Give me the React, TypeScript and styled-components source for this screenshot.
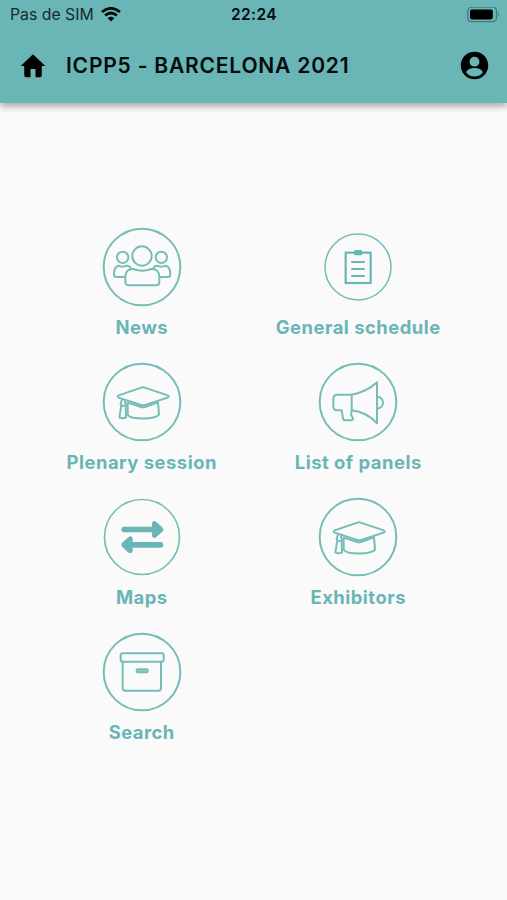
import React from "react";
import styled, { createGlobalStyle } from "styled-components";

const TEAL = "#6ab5b5";

const GlobalStyle = createGlobalStyle`
  * { box-sizing: border-box; }
  body { margin: 0; background: #fafafa; font-family: Inter, "Liberation Sans", sans-serif; }
`;

const Screen = styled.div`
  width: 507px;
  height: 900px;
  overflow: hidden;
  background: #fafafa;
`;

const Header = styled.header`
  height: 103px;
  background: ${TEAL};
  color: #030b0d;
  box-shadow: 0 4px 6px rgba(60, 40, 45, 0.35);
`;

const StatusBar = styled.div`
  height: 30px;
  display: grid;
  grid-template-columns: 1fr auto 1fr;
  align-items: center;
  padding: 0 7px 1px 10px;
`;

const Carrier = styled.div`
  display: flex;
  align-items: center;
  gap: 7px;
  font-size: 15.8px;
  line-height: 28px;
  color: #142c30;
`;

const Clock = styled.div`
  font-size: 15.5px;
  font-weight: 600;
  letter-spacing: 0.4px;
  line-height: 28px;
  padding-right: 2px;
`;

const BatterySlot = styled.div`
  display: flex;
  justify-content: flex-end;
`;

const AppBar = styled.div`
  height: 71px;
  display: flex;
  align-items: center;
  padding: 0 16px 0 18px;
`;

const Title = styled.h1`
  flex: 1;
  margin: 0 0 0 18px;
  font-size: 21px;
  font-weight: 600;
  letter-spacing: 0.8px;
  line-height: 30px;
  white-space: nowrap;
`;

const Menu = styled.main`
  display: grid;
  grid-template-columns: 216.5px 216.5px;
  grid-auto-rows: 135px;
  margin: 124px 0 0 33.5px;
`;

const MenuItem = styled.div`
  display: flex;
  flex-direction: column;
  align-items: center;
  color: ${TEAL};
`;

const Artwork = styled.svg`
  display: block;
  width: 80px;
  height: 80px;
  fill: none;
  stroke: #76bdb8;
  stroke-width: 6;
  stroke-linejoin: round;
  stroke-linecap: round;
`;

const Label = styled.span`
  margin-top: 8px;
  font-size: 18.4px;
  font-weight: 700;
  line-height: 24px;
  letter-spacing: 0.5px;
  white-space: nowrap;
`;

const People = () => (
  <>
    <circle cx="120" cy="87" r="29" />
    <circle cx="62" cy="91" r="17" />
    <circle cx="178" cy="91" r="17" />
    <path d="M70 150C70 134 79 125 93 126Q121 136 148 126C163 125 172 134 172 150V165Q172 175 161 175H81Q70 175 70 165Z" />
    <path d="M67 150H43Q36 150 36 142C36 128 39 118 50 116Q62 122 74 116Q84 117 86 123" />
    <path d="M175 150H198Q205 150 205 142C205 128 202 118 191 116Q179 122 166 116Q157 117 155 123" />
  </>
);

const Clipboard = () => (
  <>
    <rect x="83" y="77" width="75" height="91" strokeLinejoin="miter" stroke={TEAL} strokeWidth="6.5" />
    <rect x="109" y="69" width="23" height="16" rx="2" fill={TEAL} stroke="none" />
    <path d="M102 105H138M102 126H138M102 147H138" stroke={TEAL} />
  </>
);

const GraduationCap = () => (
  <>
    <path d="M118 77Q123 75 128 77L197 100Q203 103 197 107L129 129Q123 131 117 129L50 107Q44 103 50 100Z" />
    <path d="M77 122V158C86 173 160 173 171 158L168 121L129 135Q123 137 117 135L77 122" />
    <path d="M60 112L58 119Q54 126 58 131L52 166Q61 171 72 167L71 132Q74 126 69 121V114M58 131H71" />
  </>
);

const Megaphone = () => (
  <>
    <path d="M101 98Q145 91 177 61V184Q147 151 101 145Z" />
    <path d="M101 98H58Q46 98 46 110V132Q46 145 58 145H71L75 169Q76 175 82 175H98Q108 175 104 167L99 158L101 146" />
    <path d="M177 104A18 18 0 0 1 177 140" />
  </>
);

const Arrows = () => (
  <g fill={TEAL} stroke={TEAL} strokeWidth="6">
    <path d="M64 92H153V79Q155 72 161 77L179 93Q183 98 179 102L161 118Q155 122 153 116V103H64Q58 97 64 92Z" />
    <path d="M178 138H89V125Q87 118 81 123L63 139Q59 144 63 148L81 164Q87 168 89 162V149H178Q184 144 178 138Z" />
  </g>
);

const ArchiveBox = () => (
  <>
    <rect x="56" y="64" width="129" height="25" rx="6" />
    <path d="M62 89V168Q62 176 70 176H169Q177 176 177 168V89" />
    <rect x="104" y="112" width="33" height="9" rx="3" fill="#9ed0cc" />
  </>
);

type Entry = {
  label: string;
  radius: number;
  ring: number;
  Icon: () => React.JSX.Element;
};

const entries: Entry[] = [
  { label: "News", radius: 115, ring: 6, Icon: People },
  { label: "General schedule", radius: 99, ring: 4.5, Icon: Clipboard },
  { label: "Plenary session", radius: 115, ring: 6, Icon: GraduationCap },
  { label: "List of panels", radius: 115, ring: 6, Icon: Megaphone },
  { label: "Maps", radius: 112.5, ring: 5, Icon: Arrows },
  { label: "Exhibitors", radius: 115, ring: 6, Icon: GraduationCap },
  { label: "Search", radius: 115, ring: 6, Icon: ArchiveBox },
];

const Ring = styled.circle<{ $width: number }>`
  stroke-width: ${(p) => p.$width};
`;

const WifiIcon = () => (
  <svg width="20" height="15" viewBox="0 0 20 15" fill="none" stroke="#020708" strokeWidth="2.7">
    <path d="M1 5Q10-2.4 19 5M4.1 8.5Q10 3.5 15.9 8.5" />
    <path d="M10 14.4L6.7 11.2Q10 8.3 13.3 11.2Z" fill="#020708" stroke="none" />
  </svg>
);

const BatteryIcon = () => (
  <svg width="33" height="16" viewBox="0 0 33 16">
    <rect x="0.8" y="0.2" width="28.8" height="14.4" rx="4" fill="none" stroke="#47797b" strokeWidth="1.3" />
    <rect x="3" y="2.4" width="22.8" height="10" rx="1.8" fill="#000" />
    <path d="M31 5Q33 7.4 31 9.8Z" fill="#47797b" />
  </svg>
);

const HomeIcon = () => (
  <svg width="30" height="30" viewBox="0 0 24 24" fill="#000">
    <path d="M12 2.6L2.2 12H5V19.4Q5 20.9 6.5 20.9H10V14.4H14V20.9H17.5Q19 20.9 19 19.4V12H21.8Z" />
  </svg>
);

const AccountIcon = () => (
  <svg width="33" height="33" viewBox="0 0 24 24" fill="#000">
    <path d="M12 2C6.48 2 2 6.48 2 12s4.48 10 10 10 10-4.48 10-10S17.52 2 12 2Zm0 3.6a3.6 3.6 0 1 1 0 7.2 3.6 3.6 0 0 1 0-7.2ZM12 20c-2.5 0-4.7-1-6-3 .03-2 4-3.1 6-3.1s5.97 1.1 6 3.1c-1.3 2-3.5 3-6 3Z" />
  </svg>
);

export default function App() {
  return (
    <>
      <GlobalStyle />
      <Screen>
        <Header>
          <StatusBar>
            <Carrier>
              <span>Pas de SIM</span>
              <WifiIcon />
            </Carrier>
            <Clock>22:24</Clock>
            <BatterySlot>
              <BatteryIcon />
            </BatterySlot>
          </StatusBar>
          <AppBar>
            <HomeIcon />
            <Title>ICPP5 - BARCELONA 2021</Title>
            <AccountIcon />
          </AppBar>
        </Header>
        <Menu>
          {entries.map(({ label, radius, ring, Icon }) => (
            <MenuItem key={label}>
              <Artwork viewBox="0 0 240 240">
                <Ring cx="120" cy="120" r={radius} $width={ring} />
                <Icon />
              </Artwork>
              <Label>{label}</Label>
            </MenuItem>
          ))}
        </Menu>
      </Screen>
    </>
  );
}
